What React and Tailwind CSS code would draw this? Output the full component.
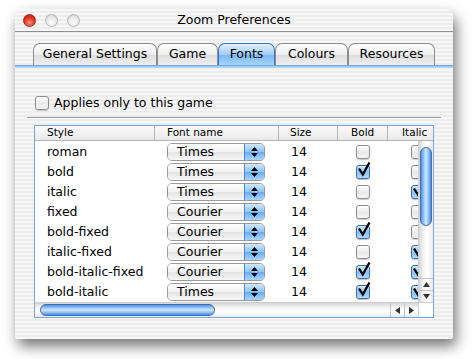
import React from "react";

const font = { fontFamily: '"DejaVu Sans", "Lucida Grande", sans-serif' };

const rows = [
  { style: "roman", font: "Times", bold: false, italic: false },
  { style: "bold", font: "Times", bold: true, italic: false },
  { style: "italic", font: "Times", bold: false, italic: true },
  { style: "fixed", font: "Courier", bold: false, italic: false },
  { style: "bold-fixed", font: "Courier", bold: true, italic: false },
  { style: "italic-fixed", font: "Courier", bold: false, italic: true },
  { style: "bold-italic-fixed", font: "Courier", bold: true, italic: true },
  { style: "bold-italic", font: "Times", bold: true, italic: true },
];

const tabs = [
  { label: "General Settings", w: "w-[124px]" },
  { label: "Game", w: "w-[61px]" },
  { label: "Fonts", w: "w-[57px]", active: true },
  { label: "Colours", w: "w-[73px]" },
  { label: "Resources", w: "w-[87px]" },
];

const Check = ({ checked }) => (
  <div className="relative w-[14px] h-[14px] shrink-0">
    <div
      className={
        checked
          ? "w-[14px] h-[14px] rounded-[3px] border border-[#3b6db3] bg-[linear-gradient(180deg,#d6ebff,#8cc2f5_55%,#b9dcfc)] shadow-[0_1px_1px_rgba(0,0,0,0.25)]"
          : "w-[14px] h-[14px] rounded-[3px] border border-[#8d8d8d] bg-[linear-gradient(180deg,#ffffff,#e9e9e9_55%,#f6f6f6)] shadow-[0_1px_1px_rgba(0,0,0,0.2)]"
      }
    />
    {checked && (
      <svg className="absolute left-[1px] top-[-3px]" width="14" height="15" viewBox="0 0 14 15">
        <path d="M2 6.5 L5.8 12.5 L12.5 0.5" fill="none" stroke="#000" strokeWidth="2.3" strokeLinejoin="miter" />
      </svg>
    )}
  </div>
);

const Popup = ({ value }) => (
  <div className="flex w-[98px] h-[18px] rounded-[5px] border border-[#9a9a9a] overflow-hidden">
    <div className="flex-1 flex items-center pl-[9px] text-[12.5px] text-black bg-[linear-gradient(180deg,#ffffff,#f1f1f1_50%,#e4e4e4_51%,#f7f7f7)]">
      {value}
    </div>
    <div className="w-[20px] flex items-center justify-center border-l border-[#4f86c9] bg-[linear-gradient(180deg,#cfe6fd,#8ec4f6_50%,#6aaef0_51%,#a8d3fb)]">
      <svg width="7" height="10" viewBox="0 0 7 10">
        <path d="M3.5 0 L7 4 L0 4 Z" fill="#000" />
        <path d="M0 6 L7 6 L3.5 10 Z" fill="#000" />
      </svg>
    </div>
  </div>
);

const Light = ({ red }) => (
  <div
    className={
      red
        ? "w-[13px] h-[13px] rounded-full border border-[#9c2a1e] bg-[radial-gradient(circle_at_50%_70%,#ff8f7a,#e0321f_55%,#a8180c)]"
        : "w-[13px] h-[13px] rounded-full border border-[#b3b3b3] bg-[radial-gradient(circle_at_50%_70%,#ffffff,#e6e6e6_60%,#cfcfcf)]"
    }
  />
);

const App = () => {
  return (
    <div className="w-[472px] h-[359px] bg-white pt-[9px] pl-[15px] overflow-hidden" style={font}>
      <div className="w-[438px] h-[330px] rounded-t-[8px] rounded-b-[3px] overflow-hidden shadow-[3px_7px_14px_rgba(0,0,0,0.55)] bg-[repeating-linear-gradient(180deg,#f7f7f7_0px,#f7f7f7_2px,#ececec_2px,#ececec_4px)] flex flex-col">
        {/* title bar */}
        <div className="h-[23px] shrink-0 border-b border-[#8e8e8e] grid grid-cols-[1fr_auto_1fr] items-center">
          <div className="flex gap-[9px] pl-[8px]">
            <Light red />
            <Light />
            <Light />
          </div>
          <div className="text-[12.5px] text-black">Zoom Preferences</div>
          <div />
        </div>

        {/* tabs */}
        <div className="mt-[11px] h-[22px] shrink-0 flex justify-center">
          {tabs.map((t) => (
            <div
              key={t.label}
              className={
                t.active
                  ? `${t.w} h-[22px] rounded-t-[7px] border border-b-0 border-[#3e74bd] bg-[linear-gradient(180deg,#e2f0fd,#9fcdf7_50%,#7ab8f2_52%,#a6d3fa)] flex items-center justify-center text-[12.5px] text-black`
                  : `${t.w} h-[22px] rounded-t-[7px] border border-b-0 border-[#8c8c8c] bg-[linear-gradient(180deg,#fdfdfd,#eeeeee_50%,#dddddd_52%,#eeeeee)] flex items-center justify-center text-[12.5px] text-black`
              }
            >
              {t.label}
            </div>
          ))}
        </div>
        <div className="h-[3px] shrink-0 bg-[linear-gradient(180deg,#5f9ce0,#9cc9f4_50%,#c4e0fa)]" />

        {/* checkbox */}
        <div className="mt-[28px] ml-[20px] h-[14px] flex items-center gap-[5px]">
          <Check />
          <span className="text-[12.5px] text-black leading-none">Applies only to this game</span>
        </div>

        {/* separator */}
        <div className="mt-[7px] mx-[12px] h-[2px] border-t border-[#9a9a9a] bg-white/70" />

        {/* table */}
        <div className="mt-[6px] ml-[19px] w-[400px] h-[193px] border border-[#7aa4d6] bg-white flex flex-col overflow-hidden">
          <div className="h-[15px] shrink-0 flex border-b border-[#b5b5b5] bg-[linear-gradient(180deg,#fafafa,#e9e9e9)] text-[10.5px] text-black">
            <div className="w-[120px] pl-[12px] border-r border-[#b5b5b5] flex items-center">Style</div>
            <div className="w-[124px] pl-[12px] border-r border-[#b5b5b5] flex items-center">Font name</div>
            <div className="w-[59px] pl-[11px] border-r border-[#b5b5b5] flex items-center">Size</div>
            <div className="w-[50px] pl-[13px] border-r border-[#b5b5b5] flex items-center">Bold</div>
            <div className="flex-1 pl-[14px] flex items-center">Italic</div>
          </div>

          <div className="flex flex-1 min-h-0">
            <div className="flex-1 overflow-hidden pt-[1px]">
              <div className="w-[420px]">
                {rows.map((r) => (
                  <div key={r.style} className="h-[20px] flex items-center text-[12.5px] text-black">
                    <div className="w-[120px] pl-[12px]">{r.style}</div>
                    <div className="w-[124px] pl-[12px]">
                      <Popup value={r.font} />
                    </div>
                    <div className="w-[59px] pl-[12px]">14</div>
                    <div className="w-[50px] flex justify-center">
                      <Check checked={r.bold} />
                    </div>
                    <div className="w-[50px] pl-[23px]">
                      <Check checked={r.italic} />
                    </div>
                  </div>
                ))}
              </div>
            </div>

            {/* vertical scroller */}
            <div className="w-[15px] shrink-0 flex flex-col border-l border-[#cfcfcf] bg-[linear-gradient(90deg,#d4d4d4,#f3f3f3_30%,#ffffff_60%,#ececec)]">
              <div className="flex-1 pt-[6px] px-[1px]">
                <div className="h-[79px] rounded-full border border-[#3c6fb6] bg-[linear-gradient(90deg,#4f8fdc,#a8d2fb_35%,#cfe7ff_50%,#7fb6f1_80%,#4b88d6)]" />
              </div>
              <div className="h-[12px] flex items-center justify-center border-t border-[#c4c4c4]">
                <svg width="7" height="5" viewBox="0 0 7 5"><path d="M3.5 0 L7 5 L0 5 Z" fill="#333" /></svg>
              </div>
              <div className="h-[12px] flex items-center justify-center border-t border-[#c4c4c4]">
                <svg width="7" height="5" viewBox="0 0 7 5"><path d="M0 0 L7 0 L3.5 5 Z" fill="#333" /></svg>
              </div>
            </div>
          </div>

          {/* horizontal scroller */}
          <div className="h-[15px] shrink-0 flex border-t border-[#cfcfcf]">
            <div className="flex-1 flex bg-[linear-gradient(180deg,#d4d4d4,#f3f3f3_30%,#ffffff_60%,#ececec)]">
              <div className="flex-1 py-[1px] pl-[5px] pr-[4px]">
                <div className="w-[175px] h-full rounded-full border border-[#3c6fb6] bg-[linear-gradient(180deg,#4f8fdc,#a8d2fb_35%,#cfe7ff_50%,#7fb6f1_80%,#4b88d6)]" />
              </div>
              <div className="w-[14px] flex items-center justify-center border-l border-[#c4c4c4]">
                <svg width="5" height="7" viewBox="0 0 5 7"><path d="M0 3.5 L5 0 L5 7 Z" fill="#333" /></svg>
              </div>
              <div className="w-[14px] flex items-center justify-center border-l border-[#c4c4c4]">
                <svg width="5" height="7" viewBox="0 0 5 7"><path d="M0 0 L5 3.5 L0 7 Z" fill="#333" /></svg>
              </div>
            </div>
            <div className="w-[15px] bg-white border-l border-[#cfcfcf]" />
          </div>
        </div>
      </div>
    </div>
  );
};

export default App;
